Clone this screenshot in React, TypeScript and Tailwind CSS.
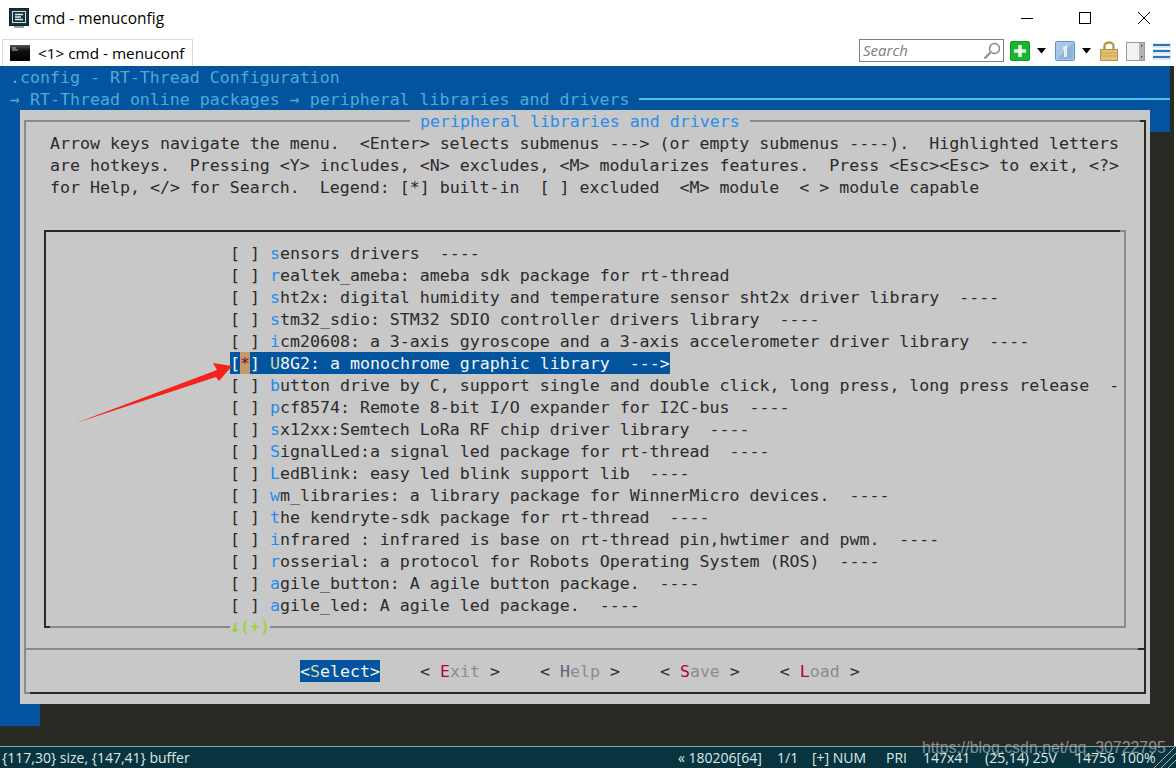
import React from "react";

const rows: [string, string][] = [
  ["s", "ensors drivers  ----"],
  ["r", "ealtek_ameba: ameba sdk package for rt-thread"],
  ["s", "ht2x: digital humidity and temperature sensor sht2x driver library  ----"],
  ["s", "tm32_sdio: STM32 SDIO controller drivers library  ----"],
  ["i", "cm20608: a 3-axis gyroscope and a 3-axis accelerometer driver library  ----"],
  ["", ""],
  ["b", "utton drive by C, support single and double click, long press, long press release  -"],
  ["p", "cf8574: Remote 8-bit I/O expander for I2C-bus  ----"],
  ["s", "x12xx:Semtech LoRa RF chip driver library  ----"],
  ["S", "ignalLed:a signal led package for rt-thread  ----"],
  ["L", "edBlink: easy led blink support lib  ----"],
  ["w", "m_libraries: a library package for WinnerMicro devices.  ----"],
  ["t", "he kendryte-sdk package for rt-thread  ----"],
  ["i", "nfrared : infrared is base on rt-thread pin,hwtimer and pwm.  ----"],
  ["r", "osserial: a protocol for Robots Operating System (ROS)  ----"],
  ["a", "gile_button: A agile button package.  ----"],
  ["a", "gile_led: A agile led package.  ----"],
];

function AppIcon() {
  return (
    <svg width="20" height="20" viewBox="0 0 20 20" className="shrink-0">
      <rect x="0.5" y="0.5" width="19" height="17" fill="#17343c" stroke="#0f2329" />
      <rect x="3.5" y="3.5" width="13" height="11" fill="none" stroke="#cfe0e0" strokeWidth="1" />
      <path d="M6 6.5h8M6 9h6M6 11.5h8" stroke="#dfeeee" strokeWidth="1.4" />
      <rect x="5" y="18.5" width="10" height="1" fill="#444" />
    </svg>
  );
}

function TabIcon() {
  return (
    <svg width="20" height="16" viewBox="0 0 20 16" className="shrink-0">
      <defs>
        <linearGradient id="tabIcon" x1="0" y1="0" x2="0" y2="1">
          <stop offset="0" stopColor="#555" />
          <stop offset="0.35" stopColor="#111" />
          <stop offset="1" stopColor="#000" />
        </linearGradient>
      </defs>
      <rect width="20" height="16" fill="url(#tabIcon)" />
      <path d="M2 3h4M2 5h6" stroke="#bbb" strokeWidth="1" />
    </svg>
  );
}

function ToolbarIcons() {
  return (
    <div className="flex items-center">
      <svg width="20" height="20" viewBox="0 0 20 20" className="ml-[6px]">
        <rect x="0.5" y="0.5" width="19" height="19" rx="1.5" fill="#18b82e" stroke="#0d9a1f" />
        <path d="M10 4v12M4 10h12" stroke="#e6f5e6" strokeWidth="3.6" />
      </svg>
      <svg width="10" height="6" viewBox="0 0 10 6" className="ml-[7px]">
        <path d="M0 0h9L4.500 5.500z" fill="#000" />
      </svg>
      <svg width="20" height="20" viewBox="0 0 20 20" className="ml-[8px]">
        <rect x="0.500" y="0.500" width="19" height="19" rx="1" fill="#a8c8e6" stroke="#5e94c8" />
        <path d="M2 18L18 2v16z" fill="#8cb4da" />
        <path d="M8 6l4-2v12h-3V8l-1 .5z" fill="#e6eff8" />
      </svg>
      <svg width="10" height="6" viewBox="0 0 10 6" className="ml-[7px]">
        <path d="M0 0h9L4.500 5.500z" fill="#000" />
      </svg>
      <svg width="18" height="20" viewBox="0 0 18 20" className="ml-[8px]">
        <path d="M4.500 9V5a4.500 3.500 0 0 1 9 0v4" fill="none" stroke="#b89a4c" strokeWidth="2.400" />
        <rect x="0.500" y="8.500" width="17" height="11" fill="#e2c274" stroke="#b5924a" />
        <path d="M1 12h16M1 15h16" stroke="#c6a45a" strokeWidth="1" />
      </svg>
      <svg width="19" height="19" viewBox="0 0 19 19" className="ml-[8px]">
        <rect x="0.500" y="0.500" width="18" height="18" fill="#f2f2f2" stroke="#9a9a9a" />
        <rect x="13" y="1" width="5" height="17" fill="#b4b4b4" />
        <rect x="15" y="3" width="1.500" height="1.500" fill="#444" />
        <rect x="15" y="14" width="1.500" height="1.500" fill="#444" />
      </svg>
      <svg width="18" height="17" viewBox="0 0 18 17" className="ml-[8px]">
        <rect width="18" height="5" fill="#dbe8f2" />
        <rect y="6" width="18" height="5" fill="#dbe8f2" />
        <rect y="12" width="18" height="5" fill="#dbe8f2" />
        <path d="M0 2h17M0 8h17M0 14h17" stroke="#2a78b8" strokeWidth="2" />
      </svg>
    </div>
  );
}

function Hot({ k, rest, hot = "text-[#b5003c]" }: { k: string; rest: string; hot?: string }) {
  return (
    <span className="w-[80px] whitespace-pre">
      <span className="text-[#2b2b2b]">{"< "}</span>
      <span className={hot}>{k}</span>
      <span className="text-[#8c8c8c]">{rest}</span>
      <span className="text-[#2b2b2b]">{" >"}</span>
    </span>
  );
}

export default function App() {
  return (
    <div
      className="relative flex h-[768px] w-[1176px] flex-col overflow-hidden bg-white"
      style={{ fontFamily: '"Open Sans", "Noto Sans", sans-serif' }}
    >
      {/* title bar */}
      <div className="flex h-[36px] items-center pl-[9px]">
        <AppIcon />
        <span className="ml-[5px] mt-[2px] text-[15.5px] text-black">cmd - menuconfig</span>
        <div className="ml-auto flex items-center">
          <svg width="14" height="14" viewBox="0 0 14 14">
            <path d="M1 7.500h12" stroke="#000" strokeWidth="1" />
          </svg>
          <svg width="14" height="14" viewBox="0 0 14 14" className="ml-[44px]">
            <rect x="1.500" y="1.500" width="11" height="11" fill="none" stroke="#000" strokeWidth="1" />
          </svg>
          <svg width="14" height="14" viewBox="0 0 14 14" className="ml-[45px] mr-[25px]">
            <path d="M1 1l12 12M13 1L1 13" stroke="#000" strokeWidth="1" />
          </svg>
        </div>
      </div>

      {/* tab and toolbar */}
      <div className="flex h-[30px] items-end pl-[2px]">
        <div className="flex h-[27px] w-[191px] items-center border border-b-0 border-[#d9d9d9] pl-[7px]">
          <TabIcon />
          <span className="ml-[8px] whitespace-pre text-[15.3px] text-black">{"<1> cmd - menuconf"}</span>
        </div>
        <div className="mb-[4px] ml-[666px] flex h-[23px] w-[145px] items-center border border-[#7f7f7f] pl-[3px]">
          <span className="text-[15px] italic leading-none text-[#7d7d7d]">Search</span>
          <svg width="18" height="18" viewBox="0 0 18 18" className="ml-auto mr-[2px]">
            <circle cx="11.500" cy="6.500" r="5" fill="none" stroke="#8a8a8a" strokeWidth="1.500" />
            <path d="M7.500 10.500L1.500 16.500" stroke="#8a8a8a" strokeWidth="2" />
          </svg>
        </div>
        <div className="mb-[5px]">
          <ToolbarIcons />
        </div>
      </div>

      {/* terminal */}
      <div className="flex h-[680px] w-[1170px] flex-col bg-[#2a2a24] text-[16.6px] leading-[24px]" style={{ fontFamily: '"DejaVu Sans Mono", monospace' }}>
        <div className="bg-[#02549e] text-[#4faad8]">
          <div className="h-[22px] whitespace-pre pl-[10px]">.config - RT-Thread Configuration</div>
          <div className="flex h-[22px] items-start whitespace-pre pl-[10px]">
            <span>→ RT-Thread online packages → peripheral libraries and drivers</span>
            <div className="ml-[10px] mt-[10px] h-[2px] flex-1 bg-[#55bdec]" />
          </div>
        </div>

        <div className="flex">
          <div className="w-[20px] bg-[#02549e]" />
          {/* dialog */}
          <div className="h-[594px] w-[1130px] bg-[#c8c8c8] px-[4px] pt-[10px] text-[#2b2b2b]">
            <div className="relative flex h-[574px] w-[1122px] flex-col border-2 border-b-[#2a2a24] border-l-[#8a8a8a] border-r-[#2a2a24] border-t-[#8a8a8a]">
              <span className="absolute -top-[12px] left-[384px] h-[22px] whitespace-pre bg-[#c8c8c8] px-[10px] text-[#2a8cec]">peripheral libraries and drivers</span>
              <span className="absolute -right-[2px] -top-[2px] h-[2px] w-[6px] bg-[#2a2a24]" />
              <span className="absolute -bottom-[2px] -left-[2px] h-[2px] w-[6px] bg-[#8a8a8a]" />

              <div className="whitespace-pre pl-[24px] pt-[10px]">
                <div className="h-[22px]">Arrow keys navigate the menu.  {"<Enter>"} selects submenus ---{">"} (or empty submenus ----).  Highlighted letters</div>
                <div className="h-[22px]">are hotkeys.  Pressing {"<Y>"} includes, {"<N>"} excludes, {"<M>"} modularizes features.  Press {"<Esc><Esc>"} to exit, {"<?>"}</div>
                <div className="h-[22px]">for Help, {"</>"} for Search.  Legend: [*] built-in  [ ] excluded  {"<M>"} module  {"< >"} module capable</div>
              </div>

              {/* menu list */}
              <div className="relative ml-[18px] mt-[32px] h-[398px] w-[1082px] border-2 border-b-[#8a8a8a] border-l-[#2a2a24] border-r-[#8a8a8a] border-t-[#2a2a24] pl-[184px] pt-[10px]">
                <span className="absolute -bottom-[2px] -left-[2px] h-[2px] w-[6px] bg-[#2a2a24]" />
                <span className="absolute -right-[2px] -top-[2px] h-[2px] w-[6px] bg-[#8a8a8a]" />
                {rows.map(([key, rest], i) =>
                  key ? (
                    <div key={i} className="h-[22px] whitespace-pre">
                      {"[ ] "}
                      <span className="text-[#1e8cf0]">{key}</span>
                      {rest}
                    </div>
                  ) : (
                    <div key={i} className="flex h-[22px] w-[440px] whitespace-pre bg-[#02549e] text-[#f4f4f4]">
                      [<span className="w-[10px] bg-[#c49a6c] text-[#7a1040]">*</span>]{" "}
                      <span className="text-[#d8d49c]">U</span>8G2: a monochrome graphic library  ---{">"}
                    </div>
                  ),
                )}
                <span className="absolute -bottom-[11px] left-[184px] h-[22px] whitespace-pre bg-[#c8c8c8] text-[#96d40f]">
                  <span className="font-bold">↓</span>(+)
                </span>
              </div>

              <div className="mt-[20px] flex h-[2px]">
                <div className="flex-1 bg-[#8a8a8a]" />
                <div className="w-[6px] bg-[#2a2a24]" />
              </div>

              {/* buttons */}
              <div className="mt-[10px] flex h-[22px] whitespace-pre pl-[274px]">
                <span className="w-[80px] bg-[#02549e] text-[#f4f4f4]">
                  {"<"}
                  <span className="text-[#d8d49c]">S</span>
                  {"elect>"}
                </span>
                <div className="ml-[40px]"><Hot k="E" rest="xit" /></div>
                <div className="ml-[40px]"><Hot k="H" rest="elp" hot="text-[#6b5a7a]" /></div>
                <div className="ml-[40px]"><Hot k="S" rest="ave" /></div>
                <div className="ml-[40px]"><Hot k="L" rest="oad" /></div>
              </div>
            </div>
          </div>
          <div className="w-[20px]">
            <div className="h-[22px] bg-[#02549e]" />
          </div>
        </div>

        <div className="h-[22px] w-[40px] bg-[#02549e]" />
      </div>

      {/* right edge of the terminal */}
      <div className="absolute right-[2px] top-[66px] h-[680px] w-[4px] bg-[#2a2a24]" />

      {/* status bar */}
      <div className="relative flex h-[22px] items-center whitespace-pre border-t border-[#8aa5a8] bg-[#07343f] text-[14px] text-[#dfe8e4]">
        <span className="ml-[2px] w-[676px]">{"{117,30} size, {147,41} buffer"}</span>
        <span className="w-[99px]">« 180206[64]</span>
        <span className="w-[35px]">1/1</span>
        <span className="w-[74px]">[+] NUM</span>
        <span className="w-[37px]">PRI</span>
        <span className="w-[62px]">147x41</span>
        <span className="w-[90px]">(25,14) 25V</span>
        <span className="w-[45px]">14756</span>
        <span>100%</span>
        <svg width="22" height="21" viewBox="0 0 22 21" className="absolute bottom-0 right-0">
          <path d="M0 21L21 0M7 21L22 6M14 21L22 13" stroke="#9fb8bc" strokeWidth="1" />
        </svg>
      </div>

      {/* annotation and watermark */}
      <svg width="170" height="70" viewBox="0 0 170 70" className="absolute left-[70px] top-[360px]">
        <polygon points="6,63 147,10 143,3 162,6 149,21 146,17" fill="#f5231c" />
      </svg>
      <span
        className="absolute left-[922px] top-[738px] text-[15.9px] leading-[20px] text-[#a8a8a8]/80"
        style={{ fontFamily: '"Liberation Sans", sans-serif' }}
      >
        https://blog.csdn.net/qq_30722795
      </span>
    </div>
  );
}
